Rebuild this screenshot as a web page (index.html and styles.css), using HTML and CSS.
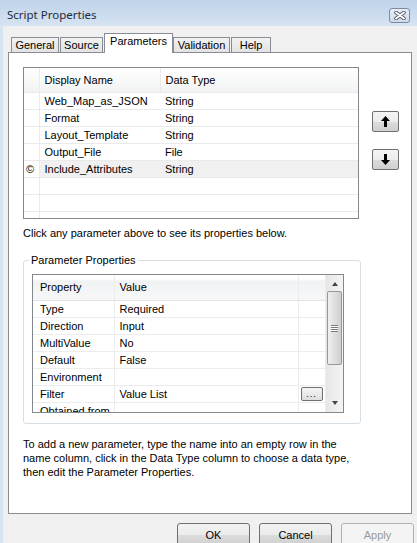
FILE: index.html
```html
<!DOCTYPE html>
<html lang="en">
<head>
    <title>Script Properties</title>
    <link rel="stylesheet" href="styles.css">
</head>
<body>
    <div class="window">
        <div class="titlebar">
            <span class="title">Script Properties</span>
            <button class="close-btn">
                <svg width="12" height="9" viewBox="0 0 12 9">
                    <path d="M2 1.5 L10 7.5 M10 1.5 L2 7.5" stroke="#4f5a6b" stroke-width="3.6" stroke-linecap="round"/>
                    <path d="M2 1.5 L10 7.5 M10 1.5 L2 7.5" stroke="#fff" stroke-width="1.8" stroke-linecap="round"/>
                </svg>
            </button>
        </div>

        <div class="frame">
            <div class="tabs">
                <div class="tab t-general">General</div>
                <div class="tab t-source">Source</div>
                <div class="tab active">Parameters</div>
                <div class="tab t-validation">Validation</div>
                <div class="tab t-help">Help</div>
            </div>

            <div class="panel">
                <div class="param-row">
                    <div class="grid">
                        <table class="params">
                            <tr class="head">
                                <td class="rowhead"></td>
                                <td class="c-name">Display Name</td>
                                <td>Data Type</td>
                            </tr>
                            <tr><td class="rowhead"></td><td>Web_Map_as_JSON</td><td>String</td></tr>
                            <tr><td class="rowhead"></td><td>Format</td><td>String</td></tr>
                            <tr><td class="rowhead"></td><td>Layout_Template</td><td>String</td></tr>
                            <tr><td class="rowhead"></td><td>Output_File</td><td>File</td></tr>
                            <tr class="selected"><td class="rowhead">&copy;</td><td>Include_Attributes</td><td>String</td></tr>
                            <tr><td class="rowhead"></td><td></td><td></td></tr>
                            <tr><td class="rowhead"></td><td></td><td></td></tr>
                            <tr><td class="rowhead"></td><td></td><td></td></tr>
                        </table>
                    </div>
                    <div class="move-btns">
                        <button class="arrow-btn">
                            <svg width="9" height="11" viewBox="0 0 9 11"><path d="M4.5 0 L9 5 L6 5 L6 11 L3 11 L3 5 L0 5 Z" fill="#000"/></svg>
                        </button>
                        <button class="arrow-btn">
                            <svg width="9" height="11" viewBox="0 0 9 11"><path d="M4.5 11 L9 6 L6 6 L6 0 L3 0 L3 6 L0 6 Z" fill="#000"/></svg>
                        </button>
                    </div>
                </div>

                <p class="hint">Click any parameter above to see its properties below.</p>

                <fieldset class="group">
                    <legend>Parameter Properties</legend>
                    <div class="prop-grid">
                        <div class="prop-view">
                            <table class="props">
                                <tr class="head">
                                    <td class="c-prop">Property</td>
                                    <td class="c-value">Value</td>
                                    <td class="c-extra"></td>
                                </tr>
                                <tr><td>Type</td><td>Required</td><td></td></tr>
                                <tr><td>Direction</td><td>Input</td><td></td></tr>
                                <tr><td>MultiValue</td><td>No</td><td></td></tr>
                                <tr><td>Default</td><td>False</td><td></td></tr>
                                <tr><td>Environment</td><td></td><td></td></tr>
                                <tr><td>Filter</td><td>Value List</td><td><span class="dots-btn">...</span></td></tr>
                                <tr><td>Obtained from</td><td></td><td></td></tr>
                            </table>
                        </div>
                        <div class="scrollbar">
                            <span class="sb-arrow up"></span>
                            <div class="sb-thumb"><span class="grip"></span></div>
                            <span class="sb-arrow down"></span>
                        </div>
                    </div>
                </fieldset>

                <p class="desc">To add a new parameter, type the name into an empty row in the<br>
                    name column, click in the Data Type column to choose a data type,<br>
                    then edit the Parameter Properties.</p>
            </div>

            <div class="buttons">
                <button class="btn">OK</button>
                <button class="btn">Cancel</button>
                <button class="btn" disabled>Apply</button>
            </div>
        </div>
    </div>
</body>
</html>
```

FILE: styles.css
```css
* {
    margin: 0;
    padding: 0;
    box-sizing: border-box;
}

body {
    width: 417px;
    height: 543px;
    overflow: hidden;
    font-family: "Liberation Sans", Arial, sans-serif;
    font-size: 11px;
    color: #000;
    background: #f0f0f0;
}

.window {
    height: 100%;
    display: flex;
    flex-direction: column;
}

/* title bar */
.titlebar {
    height: 26px;
    flex: none;
    display: flex;
    align-items: flex-start;
    justify-content: space-between;
    background: linear-gradient(#bfd3ea, #d6e3f2);
    padding: 8px 7px 0 7px;
}

.title {
    font-family: "Noto Sans", sans-serif;
    font-size: 11.5px;
    line-height: 14px;
    color: #1e2a3a;
}

.close-btn {
    width: 21px;
    height: 15px;
    border: 1px solid #7d8aa0;
    border-radius: 3px;
    background: linear-gradient(#e8eef6, #cfdaea);
    display: flex;
    align-items: center;
    justify-content: center;
}

.frame {
    flex: 1;
    border-left: 3px solid #d7e4f2;
    padding: 0 5px 0 5px;
    display: flex;
    flex-direction: column;
}

/* tabs */
.tabs {
    height: 26px;
    display: flex;
    align-items: flex-end;
    padding-left: 3px;
    position: relative;
    z-index: 1;
}

.tab {
    height: 15px;
    border: 1px solid #898c95;
    border-bottom: none;
    background: linear-gradient(#f2f2f2, #e3e3e3);
    padding: 1px 0 0 0;
    text-align: center;
    line-height: 13px;
}

.t-general { width: 48px; margin-right: 1px; }
.t-source { width: 43px; }
.t-validation { width: 57px; }
.t-help { width: 40px; margin-left: 1px; }

.tab.active {
    width: 69px;
    height: 20px;
    background: #fff;
    margin-bottom: -1px;
    margin-left: 1px;
    padding-top: 0;
    line-height: 15px;
}

/* tab page */
.panel {
    height: 462px;
    flex: none;
    background: #fff;
    border: 1px solid #898c95;
    padding: 14px 0 0 14px;
}

.param-row {
    display: flex;
    align-items: flex-start;
}

.grid {
    width: 336px;
    height: 152px;
    border: 1px solid #828790;
    overflow: hidden;
}

table {
    border-collapse: collapse;
    table-layout: fixed;
}

.params {
    width: 334px;
}

.params td {
    height: 17px;
    border-bottom: 1px solid #eaeaea;
    padding: 0 0 0 5px;
    white-space: nowrap;
    overflow: hidden;
    line-height: 16px;
}

.params .head td {
    height: 24px;
    background: linear-gradient(#fff, #f1f2f3);
    padding-top: 1px;
}

.params .rowhead {
    width: 15px;
    padding: 0 0 0 2px;
    border-right: 1px solid #eaeaea;
    background: #fff;
}

.params .c-name {
    width: 121px;
    border-right: 1px solid #eaeaea;
}

.params .selected td {
    background: #f0f0f0;
}

.params .selected td.rowhead {
    background: #fff;
}

.move-btns {
    display: flex;
    flex-direction: column;
    gap: 17px;
    margin: 44px 0 0 13px;
}

.arrow-btn {
    width: 27px;
    height: 21px;
    border: 1px solid #707070;
    border-radius: 2px;
    background: linear-gradient(#f4f4f4 0%, #ececec 50%, #dcdcdc 51%, #cfcfcf 100%);
    display: flex;
    align-items: center;
    justify-content: center;
}

.hint {
    margin-top: 8px;
    line-height: 13px;
}

/* group box */
.group {
    width: 338px;
    border: 1px solid #d5dfe5;
    border-radius: 3px;
    margin-top: 14px;
    padding: 7px 16px 10px 8px;
}

.group legend {
    margin-left: -3px;
    padding: 0 2px;
    line-height: 13px;
}

.prop-grid {
    width: 312px;
    height: 139px;
    border: 1px solid #828790;
    display: flex;
}

.prop-view {
    flex: 1;
    overflow: hidden;
}

.props {
    width: 292px;
}

.props td {
    height: 17px;
    border-bottom: 1px solid #ececec;
    border-right: 1px solid #ececec;
    padding: 0 0 0 5px;
    white-space: nowrap;
    overflow: hidden;
    line-height: 16px;
}

.props tr td:first-child {
    padding-left: 7px;
}

.props .head td {
    height: 25px;
    background: linear-gradient(#fff 15%, #f1f2f3 25%, #f6f7f8 100%);
    border-bottom: 1px solid #e2e3e4;
}

.props .c-prop { width: 81px; }
.props .c-value { width: 184px; }
.props .c-extra { width: 27px; }

.dots-btn {
    display: block;
    width: 22px;
    height: 14px;
    margin-left: -3px;
    border: 1px solid #707070;
    border-radius: 2px;
    background: linear-gradient(#f4f4f4, #dedede);
    font-size: 9px;
    line-height: 12px;
    text-align: center;
    letter-spacing: 1px;
}

.scrollbar {
    width: 17px;
    flex: none;
    background: linear-gradient(90deg, #e6e6e6, #f4f4f4);
    display: flex;
    flex-direction: column;
    align-items: center;
    padding: 0 1px;
}

.sb-arrow {
    width: 0;
    height: 0;
    border-left: 3.5px solid transparent;
    border-right: 3.5px solid transparent;
    margin: 7px 0 5px;
}

.sb-arrow.up { border-bottom: 4px solid #444; }
.sb-arrow.down { border-top: 4px solid #444; margin: auto 0 7px; }

.sb-thumb {
    width: 15px;
    height: 74px;
    border: 1px solid #979797;
    border-radius: 2px;
    background: linear-gradient(90deg, #f0f0f0, #dcdcdc 60%, #cfcfcf);
    display: flex;
    align-items: center;
    justify-content: center;
}

.grip {
    width: 7px;
    height: 7px;
    border-top: 1px solid #777;
    border-bottom: 1px solid #777;
    background: linear-gradient(#fff 0 1px, #777 1px 2px, #fff 2px 3px, #777 3px 4px, #fff 4px);
}

.desc {
    margin-top: 13px;
    width: 360px;
    line-height: 14px;
    white-space: nowrap;
}

/* dialog buttons */
.buttons {
    display: flex;
    justify-content: flex-end;
    gap: 9px;
    padding-top: 9px;
    margin-right: -2px;
}

.btn {
    width: 73px;
    height: 23px;
    border: 1px solid #707070;
    border-radius: 3px;
    background: linear-gradient(#f2f2f2 0%, #ebebeb 50%, #dddddd 51%, #cfcfcf 100%);
    font-family: "Liberation Sans", Arial, sans-serif;
    font-size: 11px;
    color: #000;
}

.btn:disabled {
    border-color: #adb2b5;
    background: #f4f4f4;
    color: #9a9a9a;
}
```
